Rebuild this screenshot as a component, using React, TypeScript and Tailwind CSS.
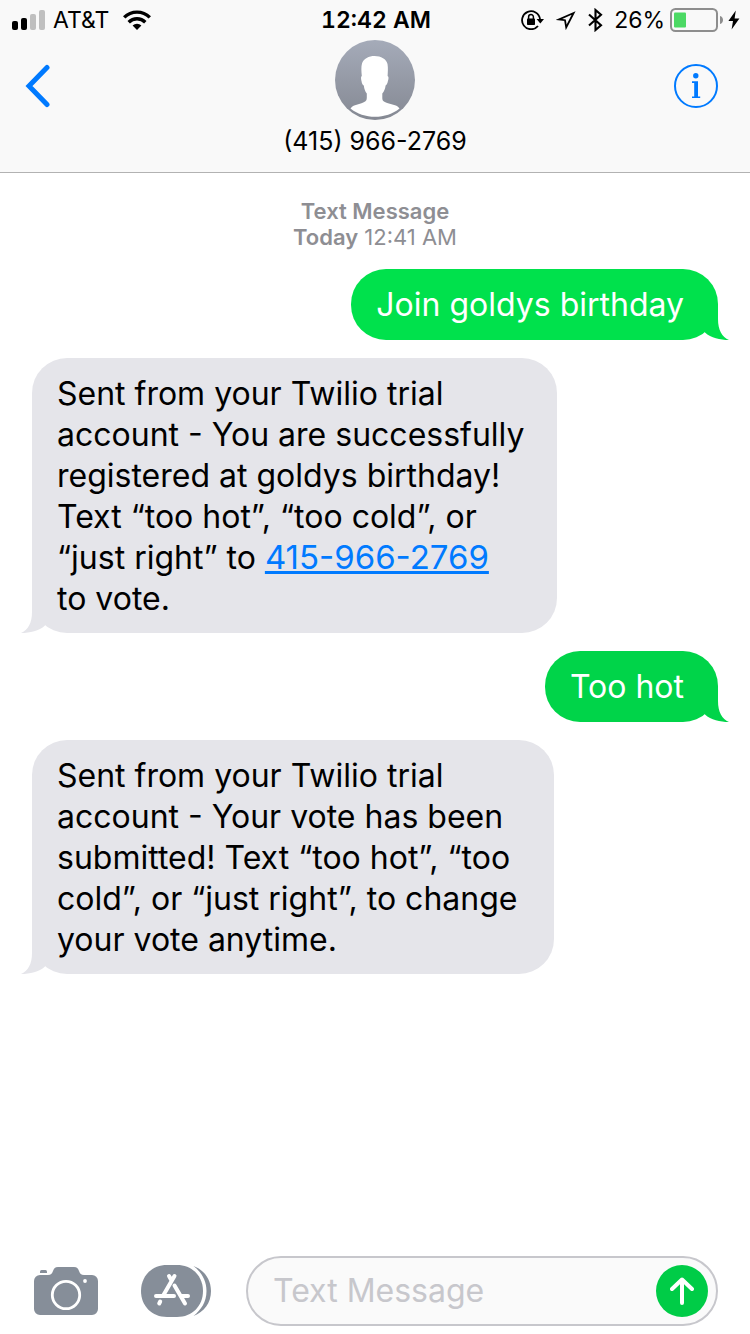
import type {ReactNode} from 'react'
import {clsx} from 'clsx'

const SignalIcon = () => (
  <svg className="w-[34px] h-5" viewBox="0 0 34 20" aria-hidden="true">
    <rect x="0" y="11" width="6" height="9" rx="2" />
    <rect x="9" y="8" width="6" height="12" rx="2" />
    <rect x="18" y="4" width="6" height="16" rx="2" fill="#bfbfbf" />
    <rect x="27" y="0" width="6" height="20" rx="2" fill="#bfbfbf" />
  </svg>
)

const WifiIcon = () => (
  <svg className="w-7 h-5" viewBox="0 0 28 20" aria-hidden="true">
    <path d="M14 20L9.6 15.6A6.2 6.2 0 0 1 18.4 15.6Z" />
    <g fill="none" stroke="#000" strokeWidth="3.4">
      <path d="M1.2 7.4A18.2 18.2 0 0 1 26.8 7.4" />
      <path d="M5.7 12.2A11.8 11.8 0 0 1 22.3 12.2" />
    </g>
  </svg>
)

const RotationLockIcon = () => (
  <svg className="w-[23px] h-5" viewBox="0 0 23 20" fill="none" aria-hidden="true">
    <path d="M17 16A9 9 0 1 1 19 9" stroke="#000" strokeWidth="1.8" />
    <path d="M15.6 9H23L19.3 13.6Z" fill="#000" />
    <rect x="6" y="8.6" width="8" height="6.4" rx="0.8" fill="#000" />
    <path d="M7.6 9V7A2.4 2.4 0 0 1 12.4 7V9" stroke="#000" strokeWidth="1.5" />
  </svg>
)

const LocationIcon = () => (
  <svg className="w-5 h-5" viewBox="0 0 20 20" fill="none" aria-hidden="true">
    <path
      d="M17.6 3L3 9.4L9 10.2L10.2 17.4Z"
      stroke="#000"
      strokeWidth="1.8"
      strokeMiterlimit="10"
    />
  </svg>
)

const BluetoothIcon = () => (
  <svg className="w-[15px] h-6" viewBox="0 0 15 24" fill="none" aria-hidden="true">
    <path
      d="M1 6.5L13 17.2L7.5 22V2L13 6.8L1 17.5"
      stroke="#000"
      strokeWidth="2.1"
    />
  </svg>
)

const BatteryIcon = () => (
  <svg className="w-[53px] h-6" viewBox="0 0 53 24" aria-hidden="true">
    <rect
      x="1"
      y="1"
      width="46"
      height="22"
      rx="4.5"
      fill="none"
      stroke="#8e8e8e"
      strokeWidth="2"
    />
    <rect x="4" y="4.5" width="12" height="15" rx="1" fill="#4cd964" />
    <path d="M50 8C54 9 54 15 50 16Z" fill="#8e8e8e" />
  </svg>
)

const BoltIcon = () => (
  <svg className="w-3 h-5" viewBox="0 0 12 20" aria-hidden="true">
    <path d="M7.8 0.5L0.4 11H5L3.6 19.5L11.4 8.4H6.6Z" />
  </svg>
)

const BackIcon = () => (
  <svg className="w-7 h-[44px]" viewBox="0 0 28 44" fill="none" aria-hidden="true">
    <path
      d="M23 3.5L5 22L23 40.5"
      stroke="#007aff"
      strokeWidth="5"
      strokeLinecap="round"
    />
  </svg>
)

const InfoIcon = () => (
  <svg className="size-11" viewBox="0 0 44 44" aria-hidden="true">
    <circle cx="22" cy="22" r="21" fill="none" stroke="#007aff" strokeWidth="2" />
    <circle cx="21.8" cy="11.8" r="2.7" fill="#007aff" />
    <path d="M18 17.3H24V32.4H26.2V34H18V32.4H20.2V18.9H18Z" fill="#007aff" />
  </svg>
)

const Avatar = () => (
  <svg className="size-20" viewBox="0 0 80 80" aria-hidden="true">
    <defs>
      <linearGradient id="avatar" x1="0" y1="0" x2="0" y2="1">
        <stop offset="0" stopColor="#a5abb9" />
        <stop offset="1" stopColor="#858993" />
      </linearGradient>
    </defs>
    <circle cx="40" cy="40" r="40" fill="url(#avatar)" />
    <path
      d="M39.5 16C46 16 51.5 19 52.5 24C53.2 28 52.8 32 52.6 36C54 36.5 53.6 39 52.8 41.5C52.4 43.5 51.6 45 50.6 45.5C50.2 49 49 51.5 47.3 53.5V58C47.3 61 49 62 53 63.2L60 65.3C62 66 63.5 67 64.5 68.5C58 74 49 76.8 40 76.8C31 76.8 22 74 15.5 68.5C16.5 67 18 66 20 65.3L26.5 63.2C30 62 31.8 61 31.8 58V53.5C30.2 51.5 29.2 49 28.8 45.5C27.6 45 26.9 43.5 26.6 41.5C26 39 25.6 36.5 26.8 36C26.4 31 26 27 27 23.5C28.5 18.5 34 16 39.5 16Z"
      fill="#fff"
    />
  </svg>
)

const CameraIcon = () => (
  <svg className="w-16 h-12" viewBox="0 0 64 48" aria-hidden="true">
    <path
      d="M6 8H14C17 8 18 6.5 19 4C20 1.5 21 0 24 0H40C43 0 44 1.5 45 4C46 6.5 47 8 50 8H58A6 6 0 0 1 64 14V42A6 6 0 0 1 58 48H6A6 6 0 0 1 0 42V14A6 6 0 0 1 6 8Z"
      fill="#868e99"
    />
    <path d="M6 6V4.5Q6 3 7.5 3H11.5Q13 3 13 4.5V6Z" fill="#868e99" />
    <circle cx="32" cy="28" r="13.7" fill="none" stroke="#fff" strokeWidth="2.8" />
    <circle cx="51" cy="14" r="1.9" fill="#fff" />
  </svg>
)

const AppsIcon = () => (
  <svg className="w-[70px] h-[52px]" viewBox="0 0 70 52" aria-hidden="true">
    <path
      d="M52.5 1C63 5 70 14 70 26C70 38 63 47 52.5 51C60 45 65.5 37 65.5 26C65.5 15 60 7 52.5 1Z"
      fill="#868e99"
    />
    <path
      d="M26 0H36C51 0 62 11 62 26C62 41 51 52 36 52H26C11 52 0 41 0 26C0 11 11 0 26 0Z"
      fill="#868e99"
    />
    <g fill="none" stroke="#fff" strokeWidth="4" strokeLinecap="round">
      <path d="M15 31H33M41 31H47" />
      <path d="M28 11L30.5 15.5M33.5 11L22.5 30M19.2 36.5L18.2 38.5" />
      <path d="M33.5 20.5L44 38.5" />
    </g>
  </svg>
)

const Tail = ({className}: {className: string}) => (
  <svg
    className={clsx('absolute bottom-0 w-6 h-[35px]', className)}
    viewBox="0 0 24 35"
    fill="currentColor"
    aria-hidden="true"
  >
    <path d="M0 0H13V14C13 25 17 32 24 35C15 35 6 33 0 27.5Z" />
  </svg>
)

interface MessageProps {
  children: ReactNode
  className?: string
}

const Sent = ({children, className}: MessageProps) => (
  <li
    className={clsx(
      'relative self-end rounded-[35px] pl-[25px] pr-[34px] py-[15px]',
      className
    )}
  >
    <Tail className="-right-[11px]" />
    <span className="relative text-white">{children}</span>
  </li>
)

const Received = ({children, className}: MessageProps) => (
  <li
    className={clsx(
      'relative self-start rounded-[35px] bg-[#e5e5ea] px-[25px] pt-[15px] pb-[14px] text-[#e5e5ea]',
      className
    )}
  >
    <Tail className="-left-[11px] -scale-x-100" />
    <p className="relative text-black">{children}</p>
  </li>
)

const StatusBar = () => (
  <div className="grid grid-cols-[1fr_auto_1fr] items-center h-10 pl-3 pr-[10px] text-[23px]">
    <div className="flex items-center gap-[7px]">
      <SignalIcon />
      <span>AT&amp;T</span>
      <span className="ml-[7px]">
        <WifiIcon />
      </span>
    </div>
    <span className="font-semibold tabular-nums">12:42 AM</span>
    <div className="flex items-center justify-end gap-[5px]">
      <span className="flex items-center gap-3 mr-[6px]">
        <RotationLockIcon />
        <LocationIcon />
        <BluetoothIcon />
      </span>
      <span>26%</span>
      <BatteryIcon />
      <BoltIcon />
    </div>
  </div>
)

export default function App() {
  return (
    <div className="flex min-h-screen flex-col bg-white text-black font-['Inter','Liberation_Sans',sans-serif]">
      <header className="border-b border-[#b2b2b2] bg-[#f9f9f9]">
        <StatusBar />
        <div className="grid grid-cols-[1fr_auto_1fr] items-start px-6 pb-4">
          <button type="button" aria-label="Back" className="mt-6 justify-self-start">
            <BackIcon />
          </button>
          <div className="flex flex-col items-center gap-[6px]">
            <Avatar />
            <h1 className="text-[25px] leading-[30px]">(415) 966-2769</h1>
          </div>
          <button type="button" aria-label="Details" className="mt-6 mr-2 justify-self-end">
            <InfoIcon />
          </button>
        </div>
      </header>

      <main className="flex-1 px-8 pt-[25px]">
        <div className="text-center text-[22px] leading-[26px] text-[#8e8e93]">
          <div className="font-semibold">Text Message</div>
          <div>
            <span className="font-semibold">Today</span> 12:41 AM
          </div>
        </div>
        <ul className="mt-[19px] flex flex-col gap-[18px] text-[32px] leading-[41px]">
          <Sent className="bg-[#00e14c] text-[#00e14c]">Join goldys birthday</Sent>
          <Received className="max-w-[525px]">
            Sent from your Twilio trial account - You are successfully registered
            at goldys birthday! Text “too hot”, “too cold”, or “just right” to{' '}
            <a href="tel:415-966-2769" className="text-[33px] text-[#007aff] underline">
              415-966-2769
            </a>{' '}
            <span className="whitespace-nowrap">to vote.</span>
          </Received>
          <Sent className="bg-[#00d449] text-[#00d449]">Too hot</Sent>
          <Received className="max-w-[522px]">
            Sent from your Twilio trial account - Your vote has been submitted!
            Text “too hot”, “too cold”, or “just right”, to change your vote
            anytime.
          </Received>
        </ul>
      </main>

      <form className="flex items-center pl-[34px] pr-8 pb-2">
        <button type="button" aria-label="Camera" className="shrink-0">
          <CameraIcon />
        </button>
        <button type="button" aria-label="Apps" className="ml-[43px] shrink-0">
          <AppsIcon />
        </button>
        <div className="ml-[35px] flex h-[70px] min-w-0 flex-1 items-center rounded-full border-2 border-[#c7c7cc] bg-[#fafafa] pl-[25px] pr-2">
          <input
            type="text"
            aria-label="Text Message"
            placeholder="Text Message"
            className="min-w-0 flex-1 text-[32px] outline-none placeholder:text-[#c7c7cc]"
          />
          <button
            type="button"
            aria-label="Send"
            className="flex size-[52px] shrink-0 items-center justify-center rounded-full bg-[#00cc47]"
          >
            <svg className="w-6 h-7" viewBox="0 0 24 28" fill="none" aria-hidden="true">
              <path
                d="M12 26V2.5M2 12L12 2.5L22 12"
                stroke="#fff"
                strokeWidth="4"
                strokeLinecap="round"
                strokeLinejoin="round"
              />
            </svg>
          </button>
        </div>
      </form>
    </div>
  )
}
